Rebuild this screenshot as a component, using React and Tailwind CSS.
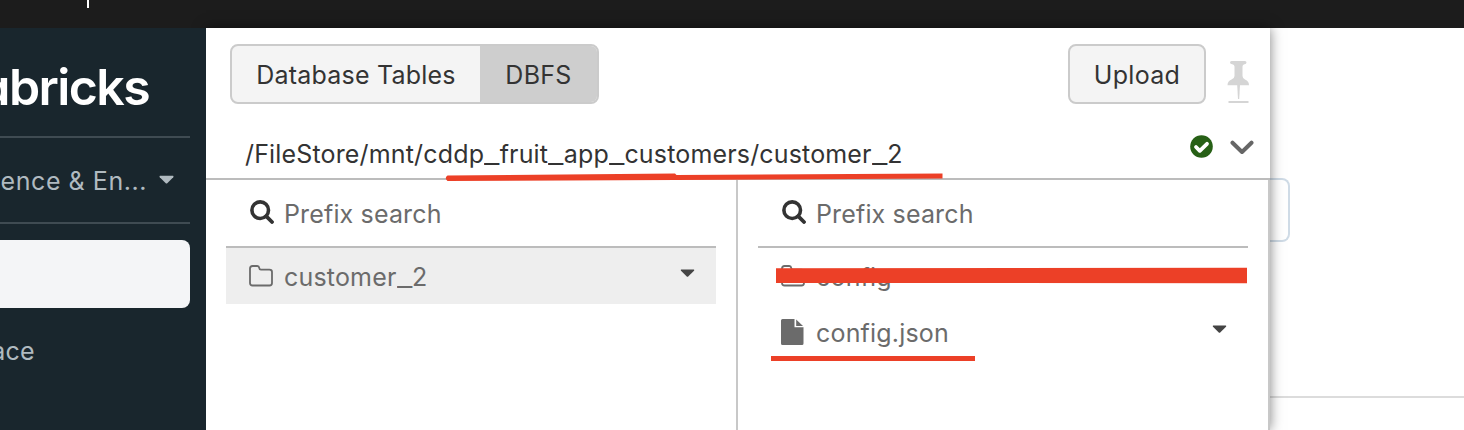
import React from "react";

function Caret({ className }) {
  return (
    <svg className={className} viewBox="0 0 16 10" fill="currentColor">
      <path d="M1 0.5H15Q16 1 15.2 2L8.8 8.4Q8 9 7.2 8.4L0.8 2Q0 1 1 0.5Z" />
    </svg>
  );
}

function SearchIcon() {
  return (
    <svg className="h-6 w-6 shrink-0 text-[#333]" viewBox="0 0 24 24" fill="none" stroke="currentColor" strokeWidth="3.6">
      <circle cx="10.2" cy="10.2" r="8.3" />
      <path d="M16.4 16.4L22 22" strokeWidth="3.8" strokeLinecap="round" />
    </svg>
  );
}

function FolderIcon() {
  return (
    <svg className="h-[22px] w-6 shrink-0" viewBox="0 0 24 22" fill="none" stroke="currentColor" strokeWidth="1.8">
      <path d="M1 3.5Q1 1 3.5 1H8.3Q10 1 10.2 2.8Q10.4 4.6 12 4.6H20.5Q23 4.6 23 7V18Q23 20.5 20.5 20.5H3.5Q1 20.5 1 18Z" />
    </svg>
  );
}

function FileIcon() {
  return (
    <svg className="h-[26px] w-[23px] shrink-0" viewBox="0 0 23 26" fill="currentColor">
      <path d="M1.5 0H13.5V8.3H22.5V24.5Q22.5 26 21 26H1.5Q0 26 0 24.5V1.5Q0 0 1.5 0Z" />
      <path d="M15.2 0.5L22 7H15.2Z" />
    </svg>
  );
}

// Underscores are drawn wider than the font's own glyph.
function Label({ text }) {
  return text.split("_").map((part, i) => (
    <React.Fragment key={i}>
      {i > 0 && <span className="mr-1 inline-block origin-left scale-x-[1.35]">_</span>}
      {part}
    </React.Fragment>
  ));
}

function Search() {
  return (
    <div className="flex h-[68px] items-center border-b-2 border-[#bcbcbc] pl-6">
      <div className="pb-0.5"><SearchIcon /></div>
      <span className="ml-2.5 pt-0.5 tracking-[0.15px] text-[#6b6b6b]">Prefix search</span>
    </div>
  );
}

function Row({ icon, label, active, caret }) {
  return (
    <div className={`flex h-14 items-center pl-[23px] pr-[21px] text-[#6b6b6b] ${active ? "bg-[#eeeeee]" : ""}`}>
      <div className="w-[35px]">{icon}</div>
      <span className="pt-0.5 tracking-[0.18px]"><Label text={label} /></span>
      {caret && <Caret className="mb-1.5 ml-auto h-[9px] w-[15px] text-[#444]" />}
    </div>
  );
}

export default function App() {
  return (
    <div className="flex h-[430px] w-[1464px] flex-col overflow-hidden whitespace-nowrap bg-white font-['Inter',sans-serif] text-[25px] leading-8">
      <header className="h-7 shrink-0 bg-[#1c1c1c] pl-[87px]">
        <div className="h-2 w-0.5 bg-white" />
      </header>
      <div className="flex min-h-0 flex-1">
        <aside className="relative z-20 w-[206px] shrink-0 overflow-hidden bg-[#19262d] pr-4 text-[#b0bac0]">
          <div className="flex h-[110px] items-center justify-end overflow-hidden border-b-2 border-[#3f4b52] pr-[41px] pt-2.5">
            <span className="text-[50px] font-[560] leading-[60px] tracking-[-1.6px] text-white [font-feature-settings:'cv11']">databricks</span>
          </div>
          <div className="flex h-[86px] items-center justify-end border-b-2 border-[#3f4b52] pr-4">
            <span className="pt-0.5 tracking-[0.55px]">Data Science &amp; En...</span>
            <Caret className="ml-3 h-[10px] w-[15px] shrink-0" />
          </div>
          <div className="mt-4 h-[68px] rounded-r-lg bg-[#f4f5f7]" />
          <div className="mt-[27px] flex w-[35px] justify-end tracking-[0.3px]">Workspace</div>
        </aside>
        <main className="relative z-10 flex w-[1064px] shrink-0 flex-col bg-white text-[#333] shadow-[0_0_12px_rgba(0,0,0,0.5)]">
          <div className="flex h-[76px] shrink-0 items-center pl-6 pr-5 pt-4">
            <div className="flex h-[60px] w-[369px] overflow-hidden rounded-lg border-2 border-[#cbcbcb] bg-[#f4f4f4]">
              <div className="flex w-[248px] items-center justify-center pt-0.5 tracking-[0.2px]">Database Tables</div>
              <div className="flex flex-1 items-center justify-center bg-[#cecece] pt-0.5 tracking-[0.3px]">DBFS</div>
            </div>
            <div className="ml-auto flex h-[60px] w-[138px] items-center justify-center rounded-lg border-2 border-[#cbcbcb] bg-[#f4f4f4] pt-0.5 tracking-[0.3px]">Upload</div>
            <svg className="ml-[21px] mt-[17px] h-[43px] w-[23px] shrink-0" viewBox="0 0 23 43" fill="#d5d5d5">
              <path d="M4.5 0H18Q19.5 0 19.5 1.5Q19.5 3 17.5 3.3Q15.5 3.8 15.5 5.5V15Q15.5 17.2 18 18.5Q22 20 22 24.2H0.5Q0.5 20 4.5 18.5Q7.5 17.2 7.5 15V5.5Q7.5 3.8 5.3 3.3Q3 3 3 1.5Q3 0 4.5 0Z" />
              <path d="M10.2 24H13L12.2 38H11Z" />
              <path d="M1.5 40H21.5V42H1.5Z" />
            </svg>
          </div>
          <div className="flex h-[76px] shrink-0 items-center border-b-2 border-[#bcbcbc] pl-[39px] pr-4 pt-[26px]">
            <span className="tracking-[0.16px]"><Label text="/FileStore/mnt/cddp_fruit_app_customers/customer_2" /></span>
            <svg className="mb-[15px] ml-auto h-[23px] w-[23px]" viewBox="0 0 23 23">
              <circle cx="11.5" cy="11.5" r="11.3" fill="#276016" />
              <path d="M6 12L9.8 15.8L17 8.8" fill="none" stroke="white" strokeWidth="3.8" strokeLinecap="round" strokeLinejoin="round" />
            </svg>
            <svg className="mb-3.5 ml-[17px] h-[15px] w-6" viewBox="0 0 24 15" fill="none" stroke="#666" strokeWidth="4" strokeLinecap="round" strokeLinejoin="round">
              <path d="M2.5 2.7L12 12L21.5 2.7" />
            </svg>
          </div>
          <div className="flex min-h-0 flex-1">
            <section className="w-[532px] border-r-2 border-[#c8c8c8] px-5">
              <Search />
              <Row icon={<FolderIcon />} label="customer_2" active caret />
            </section>
            <section className="w-[532px] border-r-2 border-[#c8c8c8] px-5">
              <Search />
              <Row icon={<FolderIcon />} label="config" />
              <Row icon={<FileIcon />} label="config.json" caret />
            </section>
          </div>
          <svg className="pointer-events-none absolute left-0 top-0 h-[402px] w-[1064px]" viewBox="206 28 1064 402" fill="#ec4027">
            <path d="M447.5 175.6L675 173.5L676.5 175L942.5 173.5V178.5L676 180L447.5 181Q444 178.3 447.5 175.6Z" />
            <path d="M776 268.3L1247 267.7V283.2L776 283Z" />
            <path d="M771 356H975V361H771Z" />
          </svg>
        </main>
        <div className="flex-1 pt-[150px]">
          <div className="h-16 w-5 rounded-r-lg border-2 border-l-0 border-[#cfdbe6]" />
          <div className="mt-[154px] h-0.5 bg-[#dcdcdc]" />
        </div>
      </div>
    </div>
  );
}
